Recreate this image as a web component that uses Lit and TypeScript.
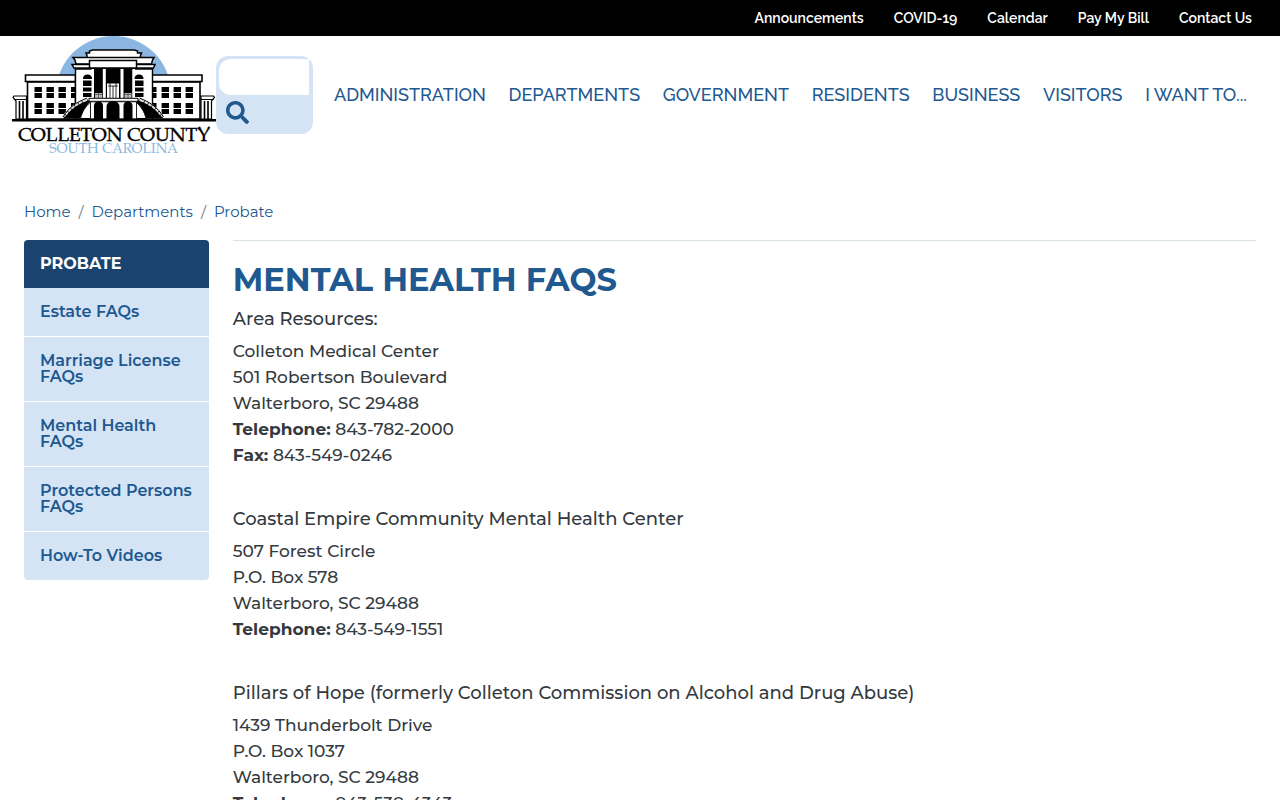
import { LitElement, html, svg, css } from "lit";
import { customElement } from "lit/decorators.js";

const TOP_LINKS = ["Announcements", "COVID-19", "Calendar", "Pay My Bill", "Contact Us"];
const MAIN_LINKS = ["Administration", "Departments", "Government", "Residents", "Business", "Visitors", "I want to..."];
const CRUMBS = ["Home", "Departments", "Probate"];
const SIDE_LINKS = ["Estate FAQs", "Marriage License FAQs", "Mental Health FAQs", "Protected Persons FAQs", "How-To Videos"];

interface Resource {
  heading: string;
  lines: string[];
  phones: [string, string][];
}

const RESOURCES: Resource[] = [
  {
    heading: "Area Resources:",
    lines: ["Colleton Medical Center", "501 Robertson Boulevard", "Walterboro, SC 29488"],
    phones: [["Telephone:", "843-782-2000"], ["Fax:", "843-549-0246"]],
  },
  {
    heading: "Coastal Empire Community Mental Health Center",
    lines: ["507 Forest Circle", "P.O. Box 578", "Walterboro, SC 29488"],
    phones: [["Telephone:", "843-549-1551"]],
  },
  {
    heading: "Pillars of Hope (formerly Colleton Commission on Alcohol and Drug Abuse)",
    lines: ["1439 Thunderbolt Drive", "P.O. Box 1037", "Walterboro, SC 29488"],
    phones: [["Telephone:", "843-538-4343"]],
  },
];

@customElement("county-logo")
export class CountyLogo extends LitElement {
  static styles = css`
    :host { display: block; }
    .logo { display: block; width: 100%; height: auto; }
    .name, .state { font-family: "TeX Gyre Pagella", "Palatino Linotype", Palatino, "Liberation Serif", serif; }
    .name { font-size: 19px; fill: #000; stroke: #000; stroke-width: 0.4px; }
    .state { font-size: 14px; fill: #8ab6e1; }
  `;

  // One wing of the courthouse; the other is its mirror image about the centre.
  private wing() {
    const rows = [51, 57, 67, 73];
    const cols = [22.5, 34.5, 46.5];
    return svg`
      <path d="M14.500 60H2l-1 1.500 3 3.500V83h10.500z" fill="#fff" stroke="#000" stroke-width="1.200"/>
      <path d="M2 63.500h12.500" stroke="#000"/>
      <path d="M7.500 65v18M11 65v18" stroke="#000" stroke-width="1.600"/>
      <path d="M15.500 46h48v37h-48z" fill="#fff" stroke="#000" stroke-width="1.600"/>
      <path d="M13.500 39h50v6.500h-50z" fill="#fff" stroke="#000" stroke-width="1.600"/>
      ${rows.map((y) => cols.map((x) => svg`<rect x=${x} y=${y} width="7.400" height="5" fill="#000"/>`))}
      ${rows.slice(0, 3).map((y) => svg`<rect x="59" y=${y} width="4" height="5" fill="#000"/>`)}
    `;
  }

  private flank() {
    return svg`
      <path d="M71 43q0-4.500 4.500-4.500T80 43z" fill="#000"/>
      <path d="M71 44.500h8.500v5.500H71zM71 51.500h8.500v4H71zM71 57h8.500v4H71z" fill="#000"/>
      <path d="M51 82.500C57 74 64 67 75 63L78 66C74 70 70 77 68 82.500z" fill="#000"/>
      <path d="M52 80C58 72 64 67 75 63.500" fill="none" stroke="#ddd" stroke-width="2.800"/>
      <path d="M51 81C57 71 65 66 75 62" fill="none" stroke="#000"/>
      <path d="M53 78l2 2.500M55.500 75l2 2.500M58.500 72l2 2.500M62 69l2 2.500M66 67l1.500 2.500M70 65l1 2.500" stroke="#000" stroke-width=".8"/>
      <path d="M68.500 82.500C70 76 73 71 78.500 66v16.500z" fill="#fff" stroke="#000"/>
    `;
  }

  render() {
    return html`
      <svg class="logo" viewBox="0 0 204 120" role="img" aria-label="Colleton County, South Carolina">
        <circle cx="101.500" cy="57.500" r="57.500" fill="#8ab6e1"/>
        <path d="M0 60h204v60H0z" fill="#fff"/>
        ${this.wing()}
        <g transform="translate(203.500 0) scale(-1 1)">${this.wing()}</g>
        <path d="M63.500 33h77v50h-77z" fill="#fff" stroke="#000" stroke-width="1.400"/>
        <path d="M75 22v-2.500l-1-2.500h3.500v-2l3-1h42l3 1v2h4l-1 2.500V22z" fill="#fff" stroke="#000" stroke-width="1.500"/>
        <path d="M61 21.500h81l-1.500 2.500-1 4H64l-1-4z" fill="#fff" stroke="#000" stroke-width="1.500"/>
        <path d="M60 28.500h83l-1.500 3.500H62z" fill="#fff" stroke="#000" stroke-width="1.500"/>
        <path d="M77.500 24.500h47V32h-47z" fill="#fff" stroke="#000" stroke-width="1.500"/>
        <path d="M82 33h38.500v29H82z" fill="#000"/>
        <path d="M90.800 33h3v29h-3zM108.500 33h3v29h-3zM79.500 33H82v29h-2.500zM120.500 33h2.500v29h-2.500z" fill="#fff"/>
        <path d="M83 57h7v5h-7zM112.500 57h7v5h-7z" fill="#bbb"/>
        <path d="M83 58.500h7M112.500 58.500h7M86.500 57v5M116 57v5" stroke="#444" stroke-width=".7"/>
        <path d="M95 47.500h12V62H95z" fill="#fff"/>
        <path d="M96 50h10M98 47v15M101 50v12M104 47v15" stroke="#000" stroke-width=".8"/>
        ${this.flank()}
        <g transform="translate(202.500 0) scale(-1 1)">${this.flank()}</g>
        <path d="M77 62.300h49v3H77z" fill="#fff" stroke="#000"/>
        <path d="M78.500 65.800h46v17h-46z" fill="#fff" stroke="#000" stroke-width=".8"/>
        <path d="M82 83V70q0-4.500 4.500-4.500T91 70v13zM94.500 83V71.500q0-6.500 6.500-6.500t6.500 6.500V83zM111.500 83V70q0-4.500 4.500-4.500t4.500 4.500v13z" fill="#000"/>
        <path d="M0 83h204v2.500H0z" fill="#000"/>
        <text class="name" x="102" y="105" text-anchor="middle">COLLETON COUNTY</text>
        <text class="state" x="101.500" y="117" text-anchor="middle">SOUTH CAROLINA</text>
      </svg>
    `;
  }
}

@customElement("app-root")
export class AppRoot extends LitElement {
  static styles = css`
    :host {
      display: block;
      height: 100vh;
      overflow: hidden;
      background: #fff;
      color: #343a40;
      font-family: Montserrat, Inter, sans-serif;
      font-size: 17px;
      line-height: 26px;
    }
    * { box-sizing: border-box; }
    a { color: #205890; text-decoration: none; }
    ul, ol { list-style: none; margin: 0; padding: 0; }
    h1, h2, p { margin: 0; }

    .topbar { background: #000; padding: 0 28px; }
    .top-links { display: flex; justify-content: flex-end; gap: 30px; }
    .top-links a {
      display: block;
      color: #fff;
      font-family: Raleway, "Open Sans", sans-serif;
      font-size: 14px;
      font-weight: 600;
      line-height: 36px;
    }

    .header { display: flex; align-items: flex-start; padding: 0 33px 0 12px; }
    .brand { flex: none; width: 204px; }
    .search {
      flex: none;
      width: 97px;
      margin-top: 20px;
      padding: 3px 4px 3px 3px;
      border-radius: 12px;
      background: #d5e4f5;
    }
    .search-input {
      display: block;
      width: 100%;
      height: 36px;
      padding: 0 8px;
      border: 0;
      border-radius: 12px 0 0 12px;
      background: #fff;
      font: inherit;
    }
    .search-button {
      display: block;
      height: 36px;
      padding: 6px 7px 7px;
      border: 0;
      background: none;
      cursor: pointer;
    }
    .search-icon { display: block; width: 23px; height: 23px; fill: #205890; }
    .main-nav { flex: 1; padding: 45px 0 0 21px; }
    .main-links { display: flex; justify-content: space-between; }
    .main-links a {
      font-family: Raleway, "Open Sans", sans-serif;
      font-size: 18px;
      font-weight: 500;
      line-height: 28px;
      text-transform: uppercase;
      white-space: nowrap;
    }

    .page { padding: 43px 24px 0; }
    .crumbs { display: flex; font-size: 15px; line-height: 26px; margin-bottom: 15px; }
    .crumbs li + li::before { content: "/"; padding: 0 8px; color: #6c757d; }

    .columns { display: grid; grid-template-columns: 15% 1fr; gap: 24px; align-items: start; }
    .side { border-radius: 4px; overflow: hidden; background: #d5e4f5; font-size: 16px; line-height: 16px; }
    .side-title { padding: 16px; background: #1a446f; color: #fff; font-size: 16px; font-weight: 700; line-height: 16px; text-transform: uppercase; }
    .side li + li { border-top: 1px solid #fff; }
    .side a { display: block; padding: 16px; font-weight: 600; }

    .content { border-top: 1px solid #d8e3ea; padding-top: 20px; font-weight: 500; }
    .title { color: #205890; font-size: 32px; font-weight: 700; line-height: 38px; text-transform: uppercase; margin-bottom: 7px; }
    .resource { margin-bottom: 38px; }
    .resource-title { font-size: 18px; font-weight: 500; line-height: 26px; margin-bottom: 6px; }
    .resource strong { font-weight: 700; }
  `;

  render() {
    return html`
      <nav class="topbar" aria-label="Quick links">
        <ul class="top-links">${TOP_LINKS.map((t) => html`<li><a href="#">${t}</a></li>`)}</ul>
      </nav>
      <header class="header">
        <a class="brand" href="#"><county-logo></county-logo></a>
        <form class="search" role="search">
          <input class="search-input" type="text" aria-label="Search" />
          <button class="search-button" type="button" aria-label="Submit search">
            <svg class="search-icon" viewBox="0 0 512 512" aria-hidden="true">
              <path d="M505 442.700L405.300 343c-4.500-4.500-10.600-7-17-7H372c27.600-35.300 44-79.700 44-128C416 93.100 322.900 0 208 0S0 93.100 0 208s93.100 208 208 208c48.300 0 92.700-16.400 128-44v16.300c0 6.400 2.500 12.500 7 17l99.700 99.700c9.400 9.400 24.600 9.400 33.900 0l28.300-28.300c9.400-9.400 9.400-24.600.1-34zM208 336c-70.700 0-128-57.200-128-128 0-70.700 57.200-128 128-128 70.700 0 128 57.200 128 128 0 70.700-57.200 128-128 128z"/>
            </svg>
          </button>
        </form>
        <nav class="main-nav" aria-label="Main">
          <ul class="main-links">${MAIN_LINKS.map((t) => html`<li><a href="#">${t}</a></li>`)}</ul>
        </nav>
      </header>
      <div class="page">
        <nav aria-label="Breadcrumb">
          <ol class="crumbs">${CRUMBS.map((t) => html`<li><a href="#">${t}</a></li>`)}</ol>
        </nav>
        <div class="columns">
          <aside class="side">
            <h2 class="side-title">Probate</h2>
            <ul>${SIDE_LINKS.map((t) => html`<li><a href="#">${t}</a></li>`)}</ul>
          </aside>
          <main class="content">
            <h1 class="title">Mental Health FAQs</h1>
            ${RESOURCES.map((r) => html`
              <section class="resource">
                <h2 class="resource-title">${r.heading}</h2>
                ${r.lines.map((l) => html`<p>${l}</p>`)}
                ${r.phones.map(([label, n]) => html`<p><strong>${label}</strong> ${n}</p>`)}
              </section>`)}
          </main>
        </div>
      </div>
    `;
  }
}
